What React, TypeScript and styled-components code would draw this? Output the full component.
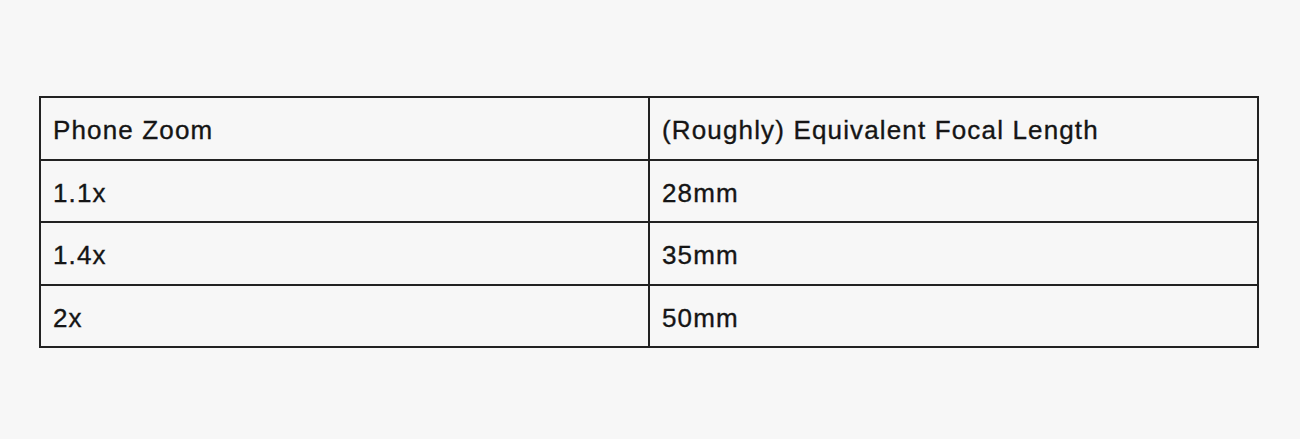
import styled, { createGlobalStyle } from "styled-components";

const GlobalStyle = createGlobalStyle`
  html, body {
    margin: 0;
    padding: 0;
    background-color: #f7f7f7;
  }
`;

const rows = [
  ["Phone Zoom", "(Roughly) Equivalent Focal Length"],
  ["1.1x", "28mm"],
  ["1.4x", "35mm"],
  ["2x", "50mm"],
];

const App = () => {
  return (
    <>
      <GlobalStyle />
      <Page>
        <Table>
          <tbody>
            {rows.map((row, index) => (
              <Row key={index}>
                {row.map((cell, i) => (
                  <Cell key={i}>{cell}</Cell>
                ))}
              </Row>
            ))}
          </tbody>
        </Table>
      </Page>
    </>
  );
};

export default App;

const Page = styled.div`
  width: 1300px;
  height: 439px;
  box-sizing: border-box;
  padding: 96px 41px 0 39px;
  background-color: #f7f7f7;
`;

const Table = styled.table`
  width: 100%;
  border-collapse: collapse;
  table-layout: fixed;
  border: 2px solid #222;
`;

const Row = styled.tr`
  height: 62.5px;
`;

const Cell = styled.td`
  border: 2px solid #222;
  padding: 5px 12px 0;
  font-family: "Liberation Sans", Arial, sans-serif;
  font-size: 26px;
  letter-spacing: 1.15px;
  color: #151515;
  -webkit-text-stroke: 0.35px #151515;
  vertical-align: middle;
`;
